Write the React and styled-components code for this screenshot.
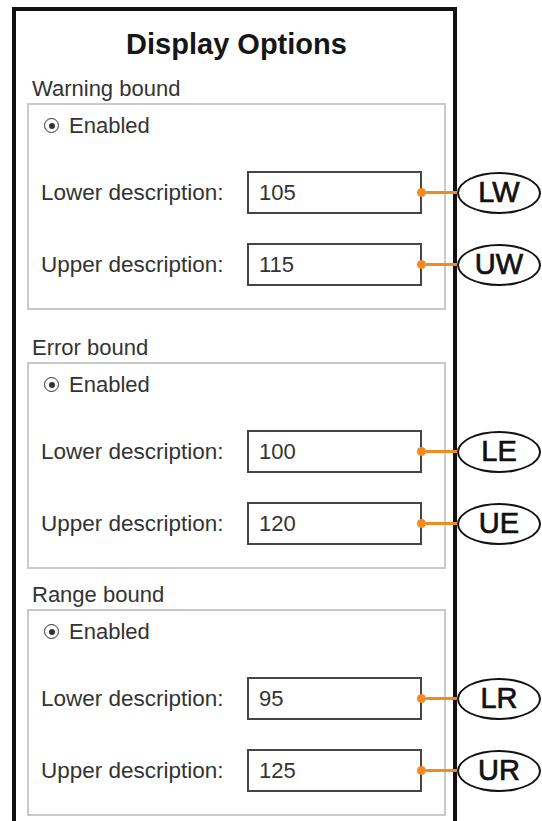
import React from "react";
import styled, { createGlobalStyle } from "styled-components";

const GlobalStyle = createGlobalStyle`
  html, body {
    margin: 0;
    padding: 0;
    background: #ffffff;
    overflow: hidden;
  }
  body {
    font-family: "Liberation Sans", Arial, sans-serif;
    color: #2b2b2b;
  }
`;

const Page = styled.div`
  padding: 7px 0 0 12px;
  width: 542px;
  height: 821px;
  box-sizing: border-box;
`;

const Panel = styled.div`
  width: 445px;
  box-sizing: border-box;
  border: 4px solid #111;
  border-bottom: none;
  padding: 17px 7px 60px 11px;
`;

const Title = styled.h1`
  margin: 0;
  font-size: 29px;
  line-height: 33px;
  font-weight: 700;
  color: #161616;
  text-align: center;
`;

const Group = styled.section`
  margin-top: ${(props) => props.$space}px;
`;

const Legend = styled.div`
  font-size: 22px;
  line-height: 25px;
  color: #333;
  padding-left: 5px;
  margin-bottom: 2px;
`;

const Box = styled.div`
  border: 2px solid #c9c9c9;
  padding: 8px 0 22px 12px;
`;

const RadioRow = styled.label`
  display: flex;
  align-items: center;
  gap: 10px;
  padding-left: 3px;
  font-size: 22px;
  line-height: 25px;
  color: #333;
`;

const Radio = styled.span`
  width: 15px;
  height: 15px;
  box-sizing: border-box;
  border: 1.5px solid #333;
  border-radius: 50%;
  display: flex;
  align-items: center;
  justify-content: center;
  &::after {
    content: "";
    width: 6px;
    height: 6px;
    border-radius: 50%;
    background: #333;
  }
`;

const Row = styled.div`
  display: flex;
  align-items: center;
  margin-top: ${(props) => (props.$first ? 33 : 29)}px;
`;

const Label = styled.span`
  flex: 0 0 206px;
  font-size: 22.5px;
  color: #333;
`;

const InputWrap = styled.div`
  position: relative;
`;

const Input = styled.div`
  width: 175px;
  height: 43px;
  box-sizing: border-box;
  border: 2px solid #454545;
  padding: 0 10px;
  display: flex;
  align-items: center;
  font-size: 22px;
  color: #333;
  background: #fff;
`;

const Tag = styled.div`
  position: absolute;
  left: calc(100% - 5px);
  top: 50%;
  transform: translateY(-50%);
  display: flex;
  align-items: center;
  z-index: 2;
`;

const Dot = styled.span`
  width: 9px;
  height: 9px;
  border-radius: 50%;
  background: #f28a22;
`;

const Wire = styled.span`
  width: 31px;
  height: 3px;
  background: #f28a22;
`;

const Oval = styled.span`
  width: 84px;
  height: 42px;
  box-sizing: border-box;
  border: 2px solid #111;
  border-radius: 50%;
  background: #fff;
  display: flex;
  align-items: center;
  justify-content: center;
  font-size: 29px;
  font-weight: 400;
  -webkit-text-stroke: 0.7px #111;
  color: #111;
`;

const groups = [
  { title: "Warning bound", space: 15, lower: "105", upper: "115", tags: ["LW", "UW"] },
  { title: "Error bound", space: 25, lower: "100", upper: "120", tags: ["LE", "UE"] },
  { title: "Range bound", space: 13, lower: "95", upper: "125", tags: ["LR", "UR"] },
];

function Field({ label, value, tag, first }) {
  return (
    <Row $first={first}>
      <Label>{label}</Label>
      <InputWrap>
        <Input>{value}</Input>
        <Tag>
          <Dot />
          <Wire />
          <Oval>{tag}</Oval>
        </Tag>
      </InputWrap>
    </Row>
  );
}

export default function App() {
  return (
    <Page>
      <GlobalStyle />
      <Panel>
        <Title>Display Options</Title>
        {groups.map((g) => (
          <Group key={g.title} $space={g.space}>
            <Legend>{g.title}</Legend>
            <Box>
              <RadioRow>
                <Radio />
                Enabled
              </RadioRow>
              <Field first label="Lower description:" value={g.lower} tag={g.tags[0]} />
              <Field label="Upper description:" value={g.upper} tag={g.tags[1]} />
            </Box>
          </Group>
        ))}
      </Panel>
    </Page>
  );
}
